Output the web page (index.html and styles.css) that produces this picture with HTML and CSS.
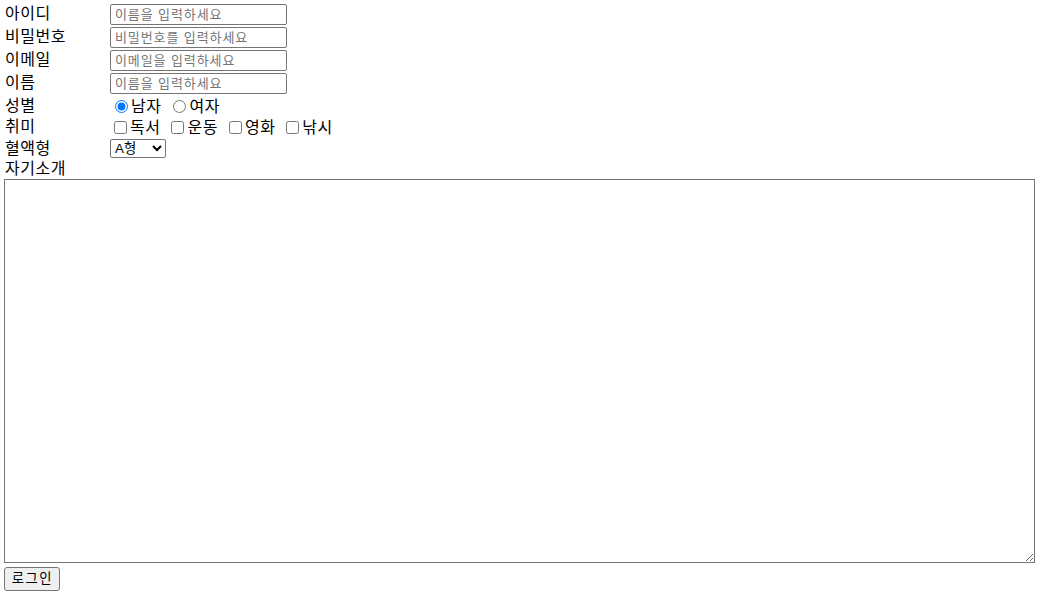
FILE: index.html
```html
<!DOCTYPE html>
<html lang="ko">
<head>
<meta charset="utf-8">
<title>회원가입</title>
<link rel="stylesheet" href="styles.css">
</head>
<body>
<form class="form">
  <div class="row">
    <label class="lbl" for="uid">아이디</label>
    <input class="txt" id="uid" type="text" placeholder="이름을 입력하세요">
  </div>
  <div class="row">
    <label class="lbl" for="pw">비밀번호</label>
    <input class="txt" id="pw" type="password" placeholder="비밀번호를 입력하세요">
  </div>
  <div class="row">
    <label class="lbl" for="mail">이메일</label>
    <input class="txt" id="mail" type="email" placeholder="이메일을 입력하세요">
  </div>
  <div class="row">
    <label class="lbl" for="nm">이름</label>
    <input class="txt" id="nm" type="text" placeholder="이름을 입력하세요">
  </div>
  <div class="row row-opt">
    <span class="lbl">성별</span>
    <div class="opts">
      <label class="opt"><input class="radio" type="radio" name="g" checked>남자</label>
      <label class="opt"><input class="radio" type="radio" name="g">여자</label>
    </div>
  </div>
  <div class="row row-opt">
    <span class="lbl">취미</span>
    <div class="opts">
      <label class="opt"><input class="check" type="checkbox">독서</label>
      <label class="opt"><input class="check" type="checkbox">운동</label>
      <label class="opt"><input class="check" type="checkbox">영화</label>
      <label class="opt"><input class="check" type="checkbox">낚시</label>
    </div>
  </div>
  <div class="row row-sel">
    <label class="lbl" for="blood">혈액형</label>
    <select class="sel" id="blood">
      <option>A형</option>
      <option>B형</option>
      <option>O형</option>
      <option>AB형</option>
    </select>
  </div>
  <div class="row row-intro">
    <label class="lbl" for="intro">자기소개</label>
  </div>
  <textarea class="area" id="intro"></textarea>
  <div class="actions">
    <button class="btn" type="button">로그인</button>
  </div>
</form>
</body>
</html>
```
FILE: styles.css
```css
html, body {
  margin: 0;
  padding: 0;
  background: #fff;
}
body {
  font-family: "Liberation Sans", "Noto Sans CJK KR", sans-serif;
  font-size: 16px;
  color: #000;
}
.form {
  padding: 4px 0 0 4px;
  display: flex;
  flex-direction: column;
  align-items: flex-start;
}
.row {
  display: flex;
  align-items: flex-start;
  height: 23px;
}
.lbl {
  width: 106px;
  padding-left: 1px;
  padding-top: 1px;
  box-sizing: border-box;
  font-size: 16px;
  line-height: 18px;
  letter-spacing: 0.5px;
  display: block;
}
.txt {
  width: 177px;
  height: 21px;
  box-sizing: border-box;
  margin: 0;
  padding: 1px 2px 1px 4px;
  border: 1px solid #767676;
  border-radius: 2px;
  font-family: "Liberation Sans", "Noto Sans CJK KR", sans-serif;
  font-size: 13px;
  line-height: 17px;
  letter-spacing: 0.9px;
  color: #000;
}
.txt::placeholder {
  color: #757575;
}
.row-opt {
  height: 21px;
}
.opts {
  display: flex;
  align-items: center;
  height: 20px;
}
.opt {
  display: flex;
  align-items: center;
  font-size: 16px;
  line-height: 18px;
  letter-spacing: 0.5px;
  margin-right: 7px;
  padding-top: 1px;
}
.radio {
  width: 13px;
  height: 13px;
  margin: 0 3px 0 5px;
  accent-color: #0075ff;
}
.check {
  width: 13px;
  height: 13px;
  margin: 0 3px 0 4px;
}
.row-sel {
  height: 19px;
  margin-top: 1px;
}
.sel {
  width: 56px;
  height: 19px;
  margin: 0;
  padding: 0;
  border: 1px solid #767676;
  border-radius: 2px;
  font-family: "Liberation Sans", "Noto Sans CJK KR", sans-serif;
  font-size: 13.33px;
  background: #fff;
  color: #000;
}
.row-intro {
  height: 21px;
}
.row-intro .lbl {
  line-height: 19px;
}
.area {
  width: 1031px;
  height: 384px;
  box-sizing: border-box;
  margin: 0;
  border: 1px solid #767676;
  resize: both;
  font-family: "Liberation Mono", monospace;
  font-size: 13px;
}
.actions {
  display: flex;
  margin-top: 4px;
}
.btn {
  width: 56px;
  height: 24px;
  margin: 0;
  padding: 0 0 0 1px;
  border: 1px solid #767676;
  border-radius: 3px;
  background: #efefef;
  font-family: "Liberation Sans", "Noto Sans CJK KR", sans-serif;
  font-size: 13.33px;
  line-height: 16px;
  letter-spacing: 1.5px;
  color: #000;
}
```
